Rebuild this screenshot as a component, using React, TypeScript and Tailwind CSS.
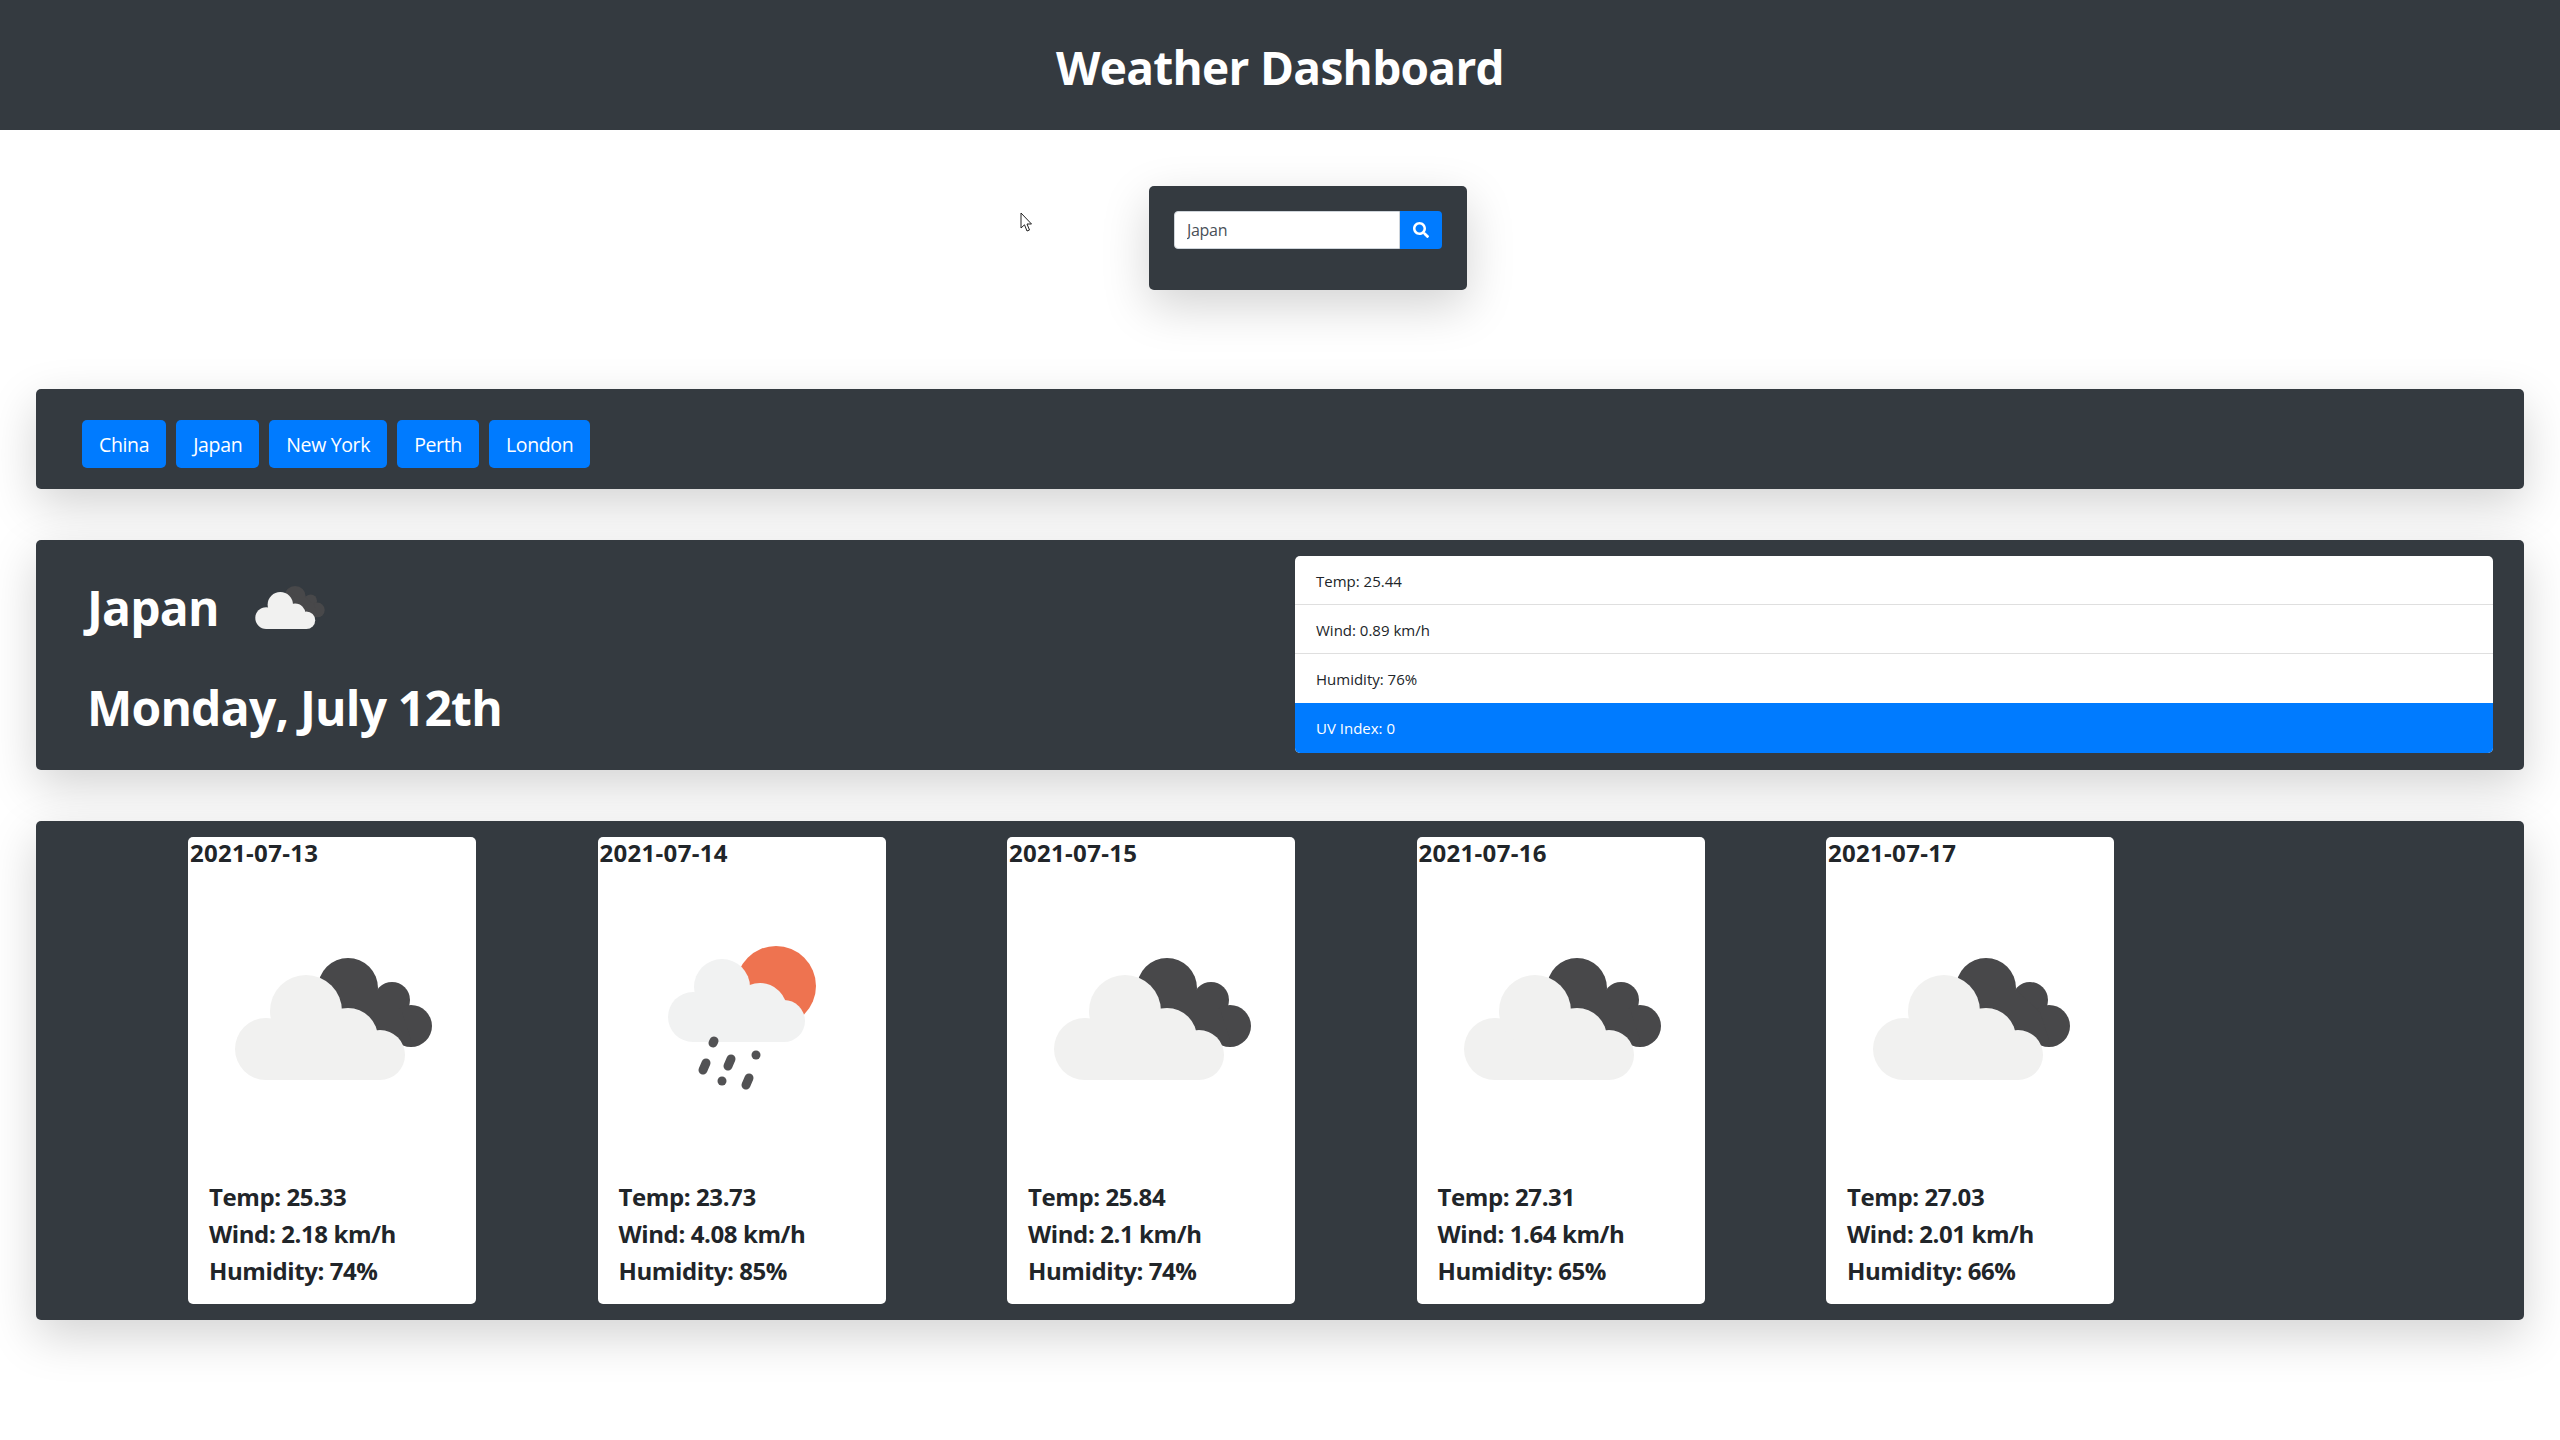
import { FaSearch } from "react-icons/fa";

function CloudIcon({ className }: { className: string }) {
  return (
    <svg viewBox="5 18 197 122" className={className}>
      <g fill="#48484a">
        <circle cx="118" cy="48" r="30" />
        <circle cx="162" cy="60" r="18" />
        <circle cx="181" cy="86" r="21" />
        <polygon points="100,35 130,50 148,50 172,72 181,100 140,100 95,50" />
      </g>
      <g fill="#f1f1f0">
        <circle cx="36" cy="109" r="31" />
        <circle cx="76" cy="71" r="36" />
        <circle cx="118" cy="98" r="30" />
        <circle cx="150" cy="115" r="25" />
        <rect x="36" y="100" width="114" height="40" />
      </g>
    </svg>
  );
}

function RainIcon({ className }: { className: string }) {
  return (
    <svg viewBox="18 17 149 145" className={className}>
      <circle cx="126" cy="57" r="40" fill="#ee7350" />
      <g fill="#f1f2f2">
        <circle cx="43" cy="88" r="25" />
        <circle cx="72" cy="58" r="28" />
        <circle cx="110" cy="81" r="27" />
        <circle cx="134" cy="92" r="21" />
        <rect x="43" y="75" width="91" height="38" />
      </g>
      <g stroke="#525254" strokeWidth="9" strokeLinecap="round">
        <line x1="64" y1="112" x2="63" y2="114" />
        <line x1="56" y1="134" x2="53" y2="141" />
        <line x1="81" y1="130" x2="78" y2="137" />
        <line x1="106" y1="126" x2="106" y2="126" />
        <line x1="72" y1="152" x2="72" y2="152" />
        <line x1="99" y1="149" x2="96" y2="156" />
      </g>
    </svg>
  );
}

const days = [
  { date: "2021-07-13", temp: "25.33", wind: "2.18", hum: "74", rain: false },
  { date: "2021-07-14", temp: "23.73", wind: "4.08", hum: "85", rain: true },
  { date: "2021-07-15", temp: "25.84", wind: "2.1", hum: "74", rain: false },
  { date: "2021-07-16", temp: "27.31", wind: "1.64", hum: "65", rain: false },
  { date: "2021-07-17", temp: "27.03", wind: "2.01", hum: "66", rain: false },
];

const cities = ["China", "Japan", "New York", "Perth", "London"];

export default function App() {
  return (
    <div className="relative min-h-[1440px] bg-white font-['Open_Sans',sans-serif] text-[#212529]">
      <header className="flex h-[130px] items-center justify-center bg-[#343a40] pt-[4px]">
        <h1 className="text-[46px] leading-[69px] font-bold tracking-[-0.7px] text-white">Weather Dashboard</h1>
      </header>

      <section className="mt-[56px] ml-[1149px] h-[104px] w-[318px] rounded-[5px] bg-[#343a40] pt-[25px] pl-[25px] shadow-[0_16px_48px_rgba(0,0,0,0.175)]">
        <div className="flex h-[38px] w-[268px]">
          <input
            readOnly
            value="Japan"
            className="h-[38px] w-[226px] rounded-l-[4px] border border-[#ced4da] bg-white px-[12px] text-[16px] tracking-[-0.3px] text-[#495057] outline-none"
          />
          <button className="flex h-[38px] w-[42px] items-center justify-center rounded-r-[4px] bg-[#007bff] text-white">
            <FaSearch className="h-[16px] w-[16px]" />
          </button>
        </div>
      </section>

      <section className="mx-[36px] mt-[99px] flex h-[100px] gap-[10px] rounded-[5px] bg-[#343a40] pt-[31px] pl-[46px] shadow-[0_16px_48px_rgba(0,0,0,0.175)]">
        {cities.map((c) => (
          <button
            key={c}
            className="h-[48px] rounded-[5px] bg-[#007bff] px-[17px] pt-[2px] text-[19.5px] leading-[30px] tracking-[-0.35px] text-white"
          >
            {c}
          </button>
        ))}
      </section>

      <section className="mx-[36px] mt-[51px] flex h-[230px] justify-between rounded-[5px] bg-[#343a40] pt-[16px] pr-[31px] pl-[51px] shadow-[0_16px_48px_rgba(0,0,0,0.175)]">
        <div className="text-white">
          <div className="mt-[15px] flex h-[72px] items-center gap-[36px]">
            <h2 className="text-[48px] leading-[69px] font-bold tracking-[-0.8px]">Japan</h2>
            <CloudIcon className="h-[43px] w-[70px]" />
          </div>
          <h2 className="mt-[30px] text-[48px] leading-[69px] font-bold tracking-[-0.8px]">Monday, July 12th</h2>
        </div>
        <ul className="h-[197px] w-[1198px] overflow-hidden rounded-[5px] bg-white text-[15px] leading-[24px]">
          <li className="h-[49px] border-b border-[#dfdfdf] px-[21px] pt-[13px]">Temp: 25.44</li>
          <li className="h-[49px] border-b border-[#dfdfdf] px-[21px] pt-[13px]">Wind: 0.89 km/h</li>
          <li className="h-[49px] px-[21px] pt-[13px]">Humidity: 76%</li>
          <li className="h-[50px] bg-[#007bff] px-[21px] pt-[13px] text-white">UV Index: 0</li>
        </ul>
      </section>

      <section className="mx-[36px] mt-[51px] flex h-[499px] gap-[121.5px] rounded-[5px] bg-[#343a40] pt-[16px] pl-[152px] shadow-[0_16px_48px_rgba(0,0,0,0.175)]">
        {days.map((d) => (
          <article key={d.date} className="flex h-[467px] w-[288px] flex-col rounded-[5px] bg-white">
            <h5 className="pl-[2px] text-[24px] leading-[32px] font-bold tracking-[0.3px]">{d.date}</h5>
            <div className="flex h-[309px] items-start">
              {d.rain ? (
                <RainIcon className="mt-[77px] ml-[70px] h-[145px] w-[149px]" />
              ) : (
                <CloudIcon className="mt-[89px] ml-[47px] h-[122px] w-[197px]" />
              )}
            </div>
            <div className="pl-[21px] text-[24px] leading-[37px] font-bold tracking-[-0.4px]">
              <p>Temp: {d.temp}</p>
              <p>Wind: {d.wind} km/h</p>
              <p>Humidity: {d.hum}%</p>
            </div>
          </article>
        ))}
      </section>

      <svg viewBox="0 0 13 21" className="absolute top-[212px] left-[1020px] h-[21px] w-[13px]">
        <path
          d="M1 1 L1 16 L4.5 12.8 L7 19 L9.5 18 L7 12 L11.5 12 Z"
          fill="#fff"
          stroke="#222"
          strokeWidth="1"
          strokeLinejoin="round"
        />
      </svg>
    </div>
  );
}
